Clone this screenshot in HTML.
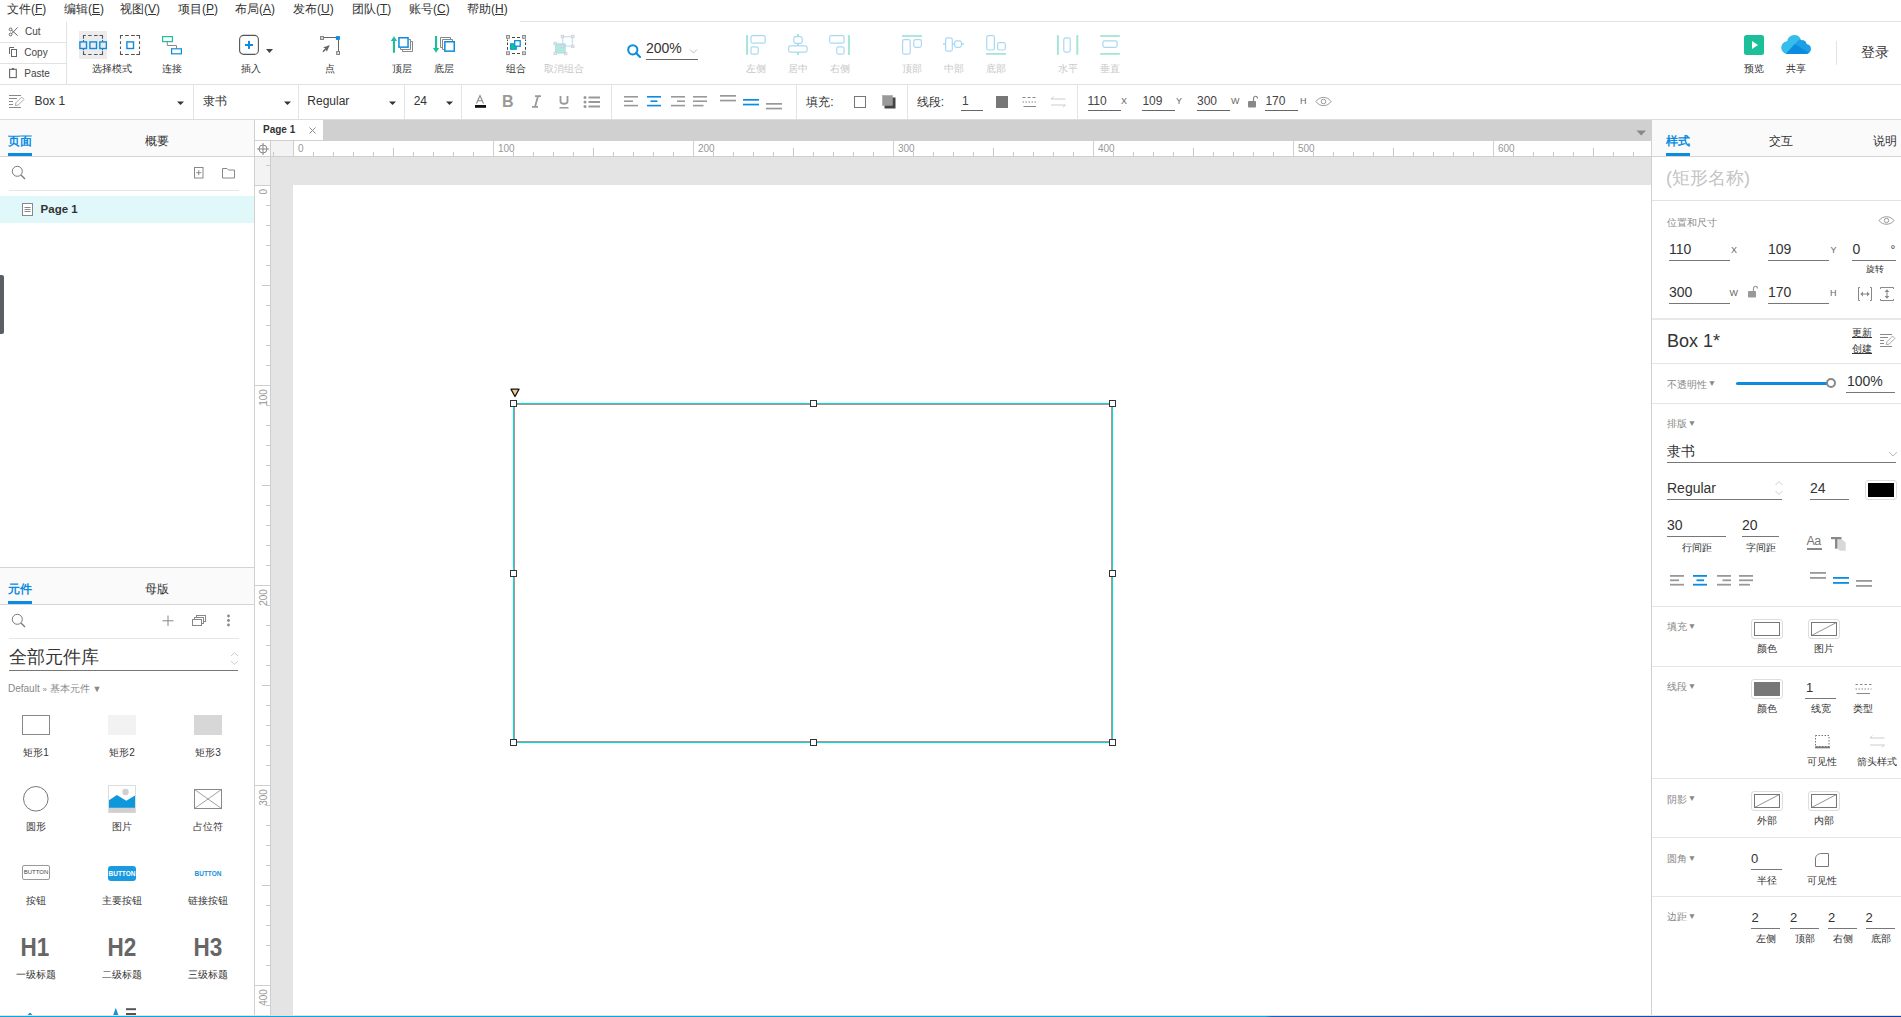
<!DOCTYPE html><html><head><meta charset="utf-8"><style>
html,body{margin:0;padding:0;width:1901px;height:1017px;overflow:hidden;background:#fff;}
body{position:relative;font-family:'Liberation Sans',sans-serif;}
div,svg{position:absolute;box-sizing:border-box;}
.t{white-space:nowrap;}
</style></head><body>
<div class="t" style="left:7px;top:3.34px;font-size:12px;line-height:12px;color:#333;font-weight:normal;text-decoration:none;">文件(<u>F</u>)</div>
<div class="t" style="left:64px;top:3.34px;font-size:12px;line-height:12px;color:#333;font-weight:normal;text-decoration:none;">编辑(<u>E</u>)</div>
<div class="t" style="left:120px;top:3.34px;font-size:12px;line-height:12px;color:#333;font-weight:normal;text-decoration:none;">视图(<u>V</u>)</div>
<div class="t" style="left:178px;top:3.34px;font-size:12px;line-height:12px;color:#333;font-weight:normal;text-decoration:none;">项目(<u>P</u>)</div>
<div class="t" style="left:235px;top:3.34px;font-size:12px;line-height:12px;color:#333;font-weight:normal;text-decoration:none;">布局(<u>A</u>)</div>
<div class="t" style="left:293px;top:3.34px;font-size:12px;line-height:12px;color:#333;font-weight:normal;text-decoration:none;">发布(<u>U</u>)</div>
<div class="t" style="left:352px;top:3.34px;font-size:12px;line-height:12px;color:#333;font-weight:normal;text-decoration:none;">团队(<u>T</u>)</div>
<div class="t" style="left:409px;top:3.34px;font-size:12px;line-height:12px;color:#333;font-weight:normal;text-decoration:none;">账号(<u>C</u>)</div>
<div class="t" style="left:467px;top:3.34px;font-size:12px;line-height:12px;color:#333;font-weight:normal;text-decoration:none;">帮助(<u>H</u>)</div>
<div style="left:520px;top:21px;width:1381px;height:1px;background:#e2e2e2"></div>
<div style="left:0px;top:84px;width:1901px;height:1px;background:#e2e2e2"></div>
<div style="left:66px;top:22px;width:1px;height:62px;background:#e2e2e2"></div>
<div style="left:0px;top:42px;width:66px;height:1px;background:#e2e2e2"></div>
<div style="left:0px;top:63px;width:66px;height:1px;background:#e2e2e2"></div>
<svg style="left:8px;top:26px;" width="11" height="11" viewBox="0 0 11 11"><g stroke="#666" fill="none" stroke-width="1"><circle cx="2.6" cy="3.4" r="1.4"/><circle cx="2.6" cy="8.5" r="1.4"/><path d="M3.7 7.6 L9.7 1.4 M3.7 4.3 L9.7 9.7"/></g></svg>
<div class="t" style="left:25px;top:26.54px;font-size:10px;line-height:10px;color:#444;font-weight:normal;">Cut</div>
<svg style="left:8px;top:46px;" width="11" height="12" viewBox="0 0 11 12"><g stroke="#666" fill="none" stroke-width="1"><path d="M1.5 8 V1.5 H6"/><rect x="3.5" y="3.5" width="5" height="7"/></g></svg>
<div class="t" style="left:24.3px;top:48.03px;font-size:10px;line-height:10px;color:#444;font-weight:normal;">Copy</div>
<svg style="left:8px;top:67px;" width="11" height="12" viewBox="0 0 11 12"><rect x="1.6" y="2.3" width="6.7" height="8.3" fill="none" stroke="#666" stroke-width="1.1"/><rect x="4" y="1" width="2" height="1.6" fill="#666"/></svg>
<div class="t" style="left:24.3px;top:68.83px;font-size:10px;line-height:10px;color:#444;font-weight:normal;">Paste</div>
<div style="left:79px;top:31px;width:28px;height:28px;background:#ececec"></div>
<svg style="left:79px;top:31px;" width="28" height="28" viewBox="0 0 28 28"><path d="M4.5 7.7 V4.5 H6.8 M9.2 4.5 H12.6 M15 4.5 H18.6 M20.4 4.5 H23.5 V7.7 M4.5 9 V10.2 M23.5 9 V10.2 M4.5 18 V19.2 M23.5 18 V19.2 M23.5 20.3 V23.5 H20.4 M18.6 23.5 H15 M12.6 23.5 H9.2 M6.8 23.5 H4.5 V20.3" fill="none" stroke="#555" stroke-width="1.1"/><g fill="none" stroke="#0a8ce0" stroke-width="1.4"><rect x="0.9" y="10.9" width="6.6" height="6.6"/><rect x="10.9" y="10.9" width="6.6" height="6.6"/><rect x="20.8" y="10.9" width="6.6" height="6.6"/></g></svg>
<svg style="left:116px;top:31px;" width="28" height="28" viewBox="0 0 28 28"><path d="M4.5 7.7 V4.5 H7 M9.1 4.5 H12.8 M15 4.5 H18.9 M20.2 4.5 H23.5 V7.7 M4.5 10.3 V12.9 M4.5 15.4 V18.1 M23.5 10.3 V12.9 M23.5 15.4 V18.1 M23.5 20.2 V23.5 H20.2 M18.9 23.5 H15 M12.8 23.5 H9.1 M7 23.5 H4.5 V20.2" fill="none" stroke="#555" stroke-width="1.1"/><rect x="10.9" y="10.9" width="6.6" height="6.6" fill="#fff" stroke="#0a8ce0" stroke-width="1.4"/></svg>
<div class="t" style="left:12px;width:200px;text-align:center;top:64.13px;font-size:10px;line-height:10px;color:#333;font-weight:normal;">选择模式</div>
<svg style="left:158px;top:31px;" width="28" height="28" viewBox="0 0 28 28"><path d="M9.3 10.5 V14.5 H18.5 V17.5" fill="none" stroke="#888" stroke-width="1"/><rect x="4.6" y="5.6" width="9.8" height="5" fill="#fff" stroke="#1dbf98" stroke-width="1.2"/><rect x="13.6" y="17.8" width="9.8" height="5" fill="#fff" stroke="#0a8ce0" stroke-width="1.2"/></svg>
<div class="t" style="left:72px;width:200px;text-align:center;top:64.13px;font-size:10px;line-height:10px;color:#333;font-weight:normal;">连接</div>
<svg style="left:236px;top:31px;" width="40" height="28" viewBox="0 0 40 28"><rect x="3.6" y="4.4" width="18.8" height="19" rx="4" fill="none" stroke="#555" stroke-width="1.1"/><rect x="12" y="9.9" width="2" height="8" fill="#0a8ce0"/><rect x="9" y="13" width="8" height="2" fill="#0a8ce0"/><path d="M30 18 H37 L33.5 22 Z" fill="#444"/></svg>
<div class="t" style="left:151px;width:200px;text-align:center;top:64.13px;font-size:10px;line-height:10px;color:#333;font-weight:normal;">插入</div>
<svg style="left:316px;top:31px;" width="28" height="28" viewBox="0 0 28 28"><path d="M7.9 6.5 H20 M22.5 8.9 V20.2" stroke="#666" stroke-width="1"/><rect x="4.6" y="5.6" width="2.8" height="2.8" fill="#eee" stroke="#777" stroke-width="1"/><rect x="19.9" y="5.1" width="4" height="3.8" fill="#0a8ce0"/><rect x="20.7" y="20.6" width="2.8" height="2.8" fill="#eee" stroke="#777" stroke-width="1"/><path d="M13.8 13.9 L7.1 16.5 L9.6 17.5 L10.8 20.8 Z" fill="#666"/><path d="M7.4 20.3 L10.2 17.5" stroke="#666" stroke-width="1.5" stroke-linecap="round"/></svg>
<div class="t" style="left:230px;width:200px;text-align:center;top:64.13px;font-size:10px;line-height:10px;color:#333;font-weight:normal;">点</div>
<svg style="left:388px;top:31px;" width="28" height="28" viewBox="0 0 28 28"><rect x="4.9" y="9" width="2.1" height="12.7" fill="#1dbf98"/><path d="M2.8 9.9 L9.1 9.9 L5.95 5.3 Z" fill="#1dbf98"/><path d="M12.5 16.9 V18.5 H22.5 V8.5 H20.8" fill="none" stroke="#888" stroke-width="1"/><path d="M14.5 18.5 V20.5 H24.5 V10.5 H22.5" fill="none" stroke="#888" stroke-width="1"/><rect x="10.95" y="6.75" width="9.1" height="9.4" fill="#fff" stroke="#0a8ce0" stroke-width="1.5"/></svg>
<div class="t" style="left:302px;width:200px;text-align:center;top:64.13px;font-size:10px;line-height:10px;color:#333;font-weight:normal;">顶层</div>
<svg style="left:430px;top:31px;" width="28" height="28" viewBox="0 0 28 28"><rect x="5" y="5" width="2.1" height="12.5" fill="#1dbf98"/><path d="M2.9 17 L9.2 17 L6.05 21.7 Z" fill="#1dbf98"/><path d="M20.5 8.5 V6.5 H10.5 V16.5 H12.5" fill="none" stroke="#888" stroke-width="1"/><path d="M22.5 10.5 V8.5 H12.5 V18.5 H14.5" fill="none" stroke="#888" stroke-width="1"/><rect x="14.85" y="10.75" width="9.4" height="9.4" fill="#fff" stroke="#0a8ce0" stroke-width="1.5"/></svg>
<div class="t" style="left:344px;width:200px;text-align:center;top:64.13px;font-size:10px;line-height:10px;color:#333;font-weight:normal;">底层</div>
<svg style="left:502px;top:31px;" width="28" height="28" viewBox="0 0 28 28"><path d="M10 6.5 H13 M15 6.5 H18 M10 22.5 H13 M15 22.5 H18 M5.5 8.5 V10 M5.5 11.5 V14 M5.5 16 V18.8 M23.5 8.5 V10 M23.5 11.5 V14 M23.5 16 V18.8" stroke="#444" stroke-width="1"/><g fill="#e4e4e4" stroke="#888" stroke-width="1"><rect x="4.6" y="4.5" width="2.8" height="2.8"/><rect x="20.6" y="4.5" width="2.8" height="2.8"/><rect x="4.6" y="20.8" width="2.8" height="2.8"/><rect x="20.6" y="20.8" width="2.8" height="2.8"/></g><rect x="8.6" y="12.8" width="5.7" height="5.5" fill="#00c896" stroke="#0a8ce0" stroke-width="1"/><rect x="12.7" y="9.7" width="5.5" height="5.5" fill="#fff" stroke="#0a8ce0" stroke-width="1.3"/></svg>
<div class="t" style="left:416px;width:200px;text-align:center;top:64.13px;font-size:10px;line-height:10px;color:#333;font-weight:normal;">组合</div>
<svg style="left:550px;top:31px;" width="28" height="28" viewBox="0 0 28 28"><rect x="5.6" y="12.8" width="9.6" height="9.3" fill="#b3e9dc" stroke="#b0dcf5" stroke-width="1"/><rect x="12.8" y="5.8" width="9.5" height="9.3" fill="none" stroke="#b0dcf5" stroke-width="1"/><g fill="#eee" stroke="#ccc" stroke-width="0.8"><rect x="4" y="11.3" width="2.4" height="2.4"/><rect x="14.5" y="21.3" width="2.4" height="2.4"/><rect x="4" y="21.3" width="2.4" height="2.4"/><rect x="11.2" y="4.2" width="2.4" height="2.4"/><rect x="21.6" y="4.2" width="2.4" height="2.4"/><rect x="21.6" y="14.2" width="2.4" height="2.4"/><rect x="11.2" y="14.2" width="2.4" height="2.4"/></g></svg>
<div class="t" style="left:464px;width:200px;text-align:center;top:64.13px;font-size:10px;line-height:10px;color:#c8c8c8;font-weight:normal;">取消组合</div>
<svg style="left:626px;top:43px;" width="16" height="16" viewBox="0 0 16 16"><circle cx="6.8" cy="6.8" r="4.6" fill="none" stroke="#0a8ce0" stroke-width="2"/><path d="M10 10 L14 14" stroke="#0a8ce0" stroke-width="2.2" stroke-linecap="round"/></svg>
<div class="t" style="left:646px;top:41.35px;font-size:14px;line-height:14px;color:#333;font-weight:normal;">200%</div>
<div style="left:646px;top:59px;width:52px;height:1px;background:#666"></div>
<svg style="left:689px;top:48px;" width="10" height="7" viewBox="0 0 10 7"><path d="M1 1.5 L4.5 5 L8 1.5" fill="none" stroke="#bbb" stroke-width="1"/></svg>
<svg style="left:742px;top:31px;" width="28" height="28" viewBox="0 0 28 28"><rect x="4.1" y="4.1" width="2.0" height="19.8" fill="#a6e5d6"/><rect x="9.0" y="4.7" width="14.2" height="7.5" rx="1.8" fill="none" stroke="#a9d8f5" stroke-width="1.2"/><rect x="9.0" y="15.8" width="7.2" height="7.4" rx="1.8" fill="none" stroke="#a9d8f5" stroke-width="1.2"/></svg>
<div class="t" style="left:656px;width:200px;text-align:center;top:64.13px;font-size:10px;line-height:10px;color:#c8c8c8;font-weight:normal;">左侧</div>
<svg style="left:784px;top:31px;" width="28" height="28" viewBox="0 0 28 28"><rect x="13" y="3" width="2.0" height="20.9" fill="#a6e5d6"/><rect x="9.8" y="5.7" width="8.4" height="6.6" rx="1.8" fill="#fff" stroke="#a9d8f5" stroke-width="1.2"/><rect x="4.6" y="14.8" width="18.5" height="6.3" rx="1.8" fill="#fff" stroke="#a9d8f5" stroke-width="1.2"/></svg>
<div class="t" style="left:698px;width:200px;text-align:center;top:64.13px;font-size:10px;line-height:10px;color:#c8c8c8;font-weight:normal;">居中</div>
<svg style="left:826px;top:31px;" width="28" height="28" viewBox="0 0 28 28"><rect x="21.9" y="4.1" width="2.0" height="19.8" fill="#a6e5d6"/><rect x="3.7" y="4.7" width="14.4" height="7.5" rx="1.8" fill="none" stroke="#a9d8f5" stroke-width="1.2"/><rect x="10.8" y="15.8" width="7.3" height="7.4" rx="1.8" fill="none" stroke="#a9d8f5" stroke-width="1.2"/></svg>
<div class="t" style="left:740px;width:200px;text-align:center;top:64.13px;font-size:10px;line-height:10px;color:#c8c8c8;font-weight:normal;">右侧</div>
<svg style="left:898px;top:31px;" width="28" height="28" viewBox="0 0 28 28"><rect x="4" y="4.1" width="20.0" height="1.8" fill="#a6e5d6"/><rect x="4.6" y="8.7" width="7.6" height="14.5" rx="1.8" fill="none" stroke="#a9d8f5" stroke-width="1.2"/><rect x="15.8" y="8.7" width="7.6" height="7.6" rx="1.8" fill="none" stroke="#a9d8f5" stroke-width="1.2"/></svg>
<div class="t" style="left:812px;width:200px;text-align:center;top:64.13px;font-size:10px;line-height:10px;color:#c8c8c8;font-weight:normal;">顶部</div>
<svg style="left:940px;top:31px;" width="28" height="28" viewBox="0 0 28 28"><rect x="3" y="12.1" width="21.0" height="1.6" fill="#a6e5d6"/><rect x="5.6" y="6.9" width="6.7" height="13.3" rx="1.8" fill="#fff" stroke="#a9d8f5" stroke-width="1.2"/><rect x="14.6" y="9.9" width="6.8" height="6.4" rx="1.8" fill="#fff" stroke="#a9d8f5" stroke-width="1.2"/></svg>
<div class="t" style="left:854px;width:200px;text-align:center;top:64.13px;font-size:10px;line-height:10px;color:#c8c8c8;font-weight:normal;">中部</div>
<svg style="left:982px;top:31px;" width="28" height="28" viewBox="0 0 28 28"><rect x="4" y="22" width="20.0" height="1.8" fill="#a6e5d6"/><rect x="4.7" y="4.7" width="7.7" height="14.3" rx="1.8" fill="none" stroke="#a9d8f5" stroke-width="1.2"/><rect x="15.6" y="11.7" width="7.7" height="7.3" rx="1.8" fill="none" stroke="#a9d8f5" stroke-width="1.2"/></svg>
<div class="t" style="left:896px;width:200px;text-align:center;top:64.13px;font-size:10px;line-height:10px;color:#c8c8c8;font-weight:normal;">底部</div>
<svg style="left:1054px;top:31px;" width="28" height="28" viewBox="0 0 28 28"><rect x="2.9" y="4.1" width="2.0" height="19.7" fill="#a6e5d6"/><rect x="22.3" y="4.1" width="2.0" height="19.7" fill="#a6e5d6"/><rect x="9.8" y="6.9" width="6.4" height="14.2" rx="1.8" fill="none" stroke="#a9d8f5" stroke-width="1.2"/></svg>
<div class="t" style="left:968px;width:200px;text-align:center;top:64.13px;font-size:10px;line-height:10px;color:#c8c8c8;font-weight:normal;">水平</div>
<svg style="left:1096px;top:31px;" width="28" height="28" viewBox="0 0 28 28"><rect x="4.2" y="4.1" width="19.6" height="1.8" fill="#a6e5d6"/><rect x="4.2" y="22" width="19.6" height="1.8" fill="#a6e5d6"/><rect x="6.9" y="9.9" width="14.2" height="6.4" rx="1.8" fill="none" stroke="#a9d8f5" stroke-width="1.2"/></svg>
<div class="t" style="left:1010px;width:200px;text-align:center;top:64.13px;font-size:10px;line-height:10px;color:#c8c8c8;font-weight:normal;">垂直</div>
<svg style="left:1744px;top:35px;" width="20" height="20" viewBox="0 0 20 20"><rect x="0" y="0" width="20" height="20" rx="2.5" fill="#1dbf98"/><path d="M8 6 L14 10 L8 14 Z" fill="#fff"/></svg>
<div class="t" style="left:1654px;width:200px;text-align:center;top:64.13px;font-size:10px;line-height:10px;color:#333;font-weight:normal;">预览</div>
<svg style="left:1780px;top:34px;" width="32" height="21" viewBox="0 0 32 21"><defs><clipPath id="cl"><circle cx="7.5" cy="13.6" r="6.3"/><circle cx="14.2" cy="8" r="7"/><circle cx="22" cy="10.8" r="4.6"/><circle cx="26" cy="15" r="4.8"/><rect x="7.5" y="12" width="18.5" height="7.9"/></clipPath></defs><g clip-path="url(#cl)"><rect x="0" y="0" width="32" height="21" fill="#36bdea"/><path d="M5.8 20 L19.2 5.5 L32 5.5 L32 21 Z" fill="#1c9fe4"/><path d="M5.8 20 L14.7 10 L31 20 Z" fill="#0a8de0"/></g></svg>
<div class="t" style="left:1696px;width:200px;text-align:center;top:64.13px;font-size:10px;line-height:10px;color:#333;font-weight:normal;">共享</div>
<div style="left:1836px;top:41px;width:1px;height:24px;background:#e4e4e4"></div>
<div class="t" style="left:1861px;top:45.45px;font-size:14px;line-height:14px;color:#333;font-weight:normal;">登录</div>
<div style="left:0px;top:119px;width:1901px;height:1px;background:#dcdcdc"></div>
<svg style="left:8px;top:94px;" width="17" height="15" viewBox="0 0 17 15"><path d="M1 1.5 H13 M1 4.5 H9 M1 7.5 H5 M1 10.5 H5 M1 13.5 H13" stroke="#888" stroke-width="1"/><path d="M7.3 11.7 L7.9 8.8 L13.6 3.1 L15.9 5.4 L10.2 11.1 Z" fill="none" stroke="#aaa" stroke-width="1"/></svg>
<div class="t" style="left:34.4px;top:95.04px;font-size:12px;line-height:12px;color:#333;font-weight:normal;">Box 1</div>
<svg style="left:177px;top:101px;" width="7" height="4" viewBox="0 0 7 4"><path d="M0 0.5 H7 L3.5 4 Z" fill="#333"/></svg>
<div style="left:193px;top:85px;width:1px;height:34px;background:#e4e4e4"></div>
<div class="t" style="left:203px;top:95.04px;font-size:12px;line-height:12px;color:#333;font-weight:normal;">隶书</div>
<svg style="left:284px;top:101px;" width="7" height="4" viewBox="0 0 7 4"><path d="M0 0.5 H7 L3.5 4 Z" fill="#333"/></svg>
<div style="left:298px;top:85px;width:1px;height:34px;background:#e4e4e4"></div>
<div class="t" style="left:307.3px;top:95.04px;font-size:12px;line-height:12px;color:#333;font-weight:normal;">Regular</div>
<svg style="left:389px;top:101px;" width="7" height="4" viewBox="0 0 7 4"><path d="M0 0.5 H7 L3.5 4 Z" fill="#333"/></svg>
<div style="left:404px;top:85px;width:1px;height:34px;background:#e4e4e4"></div>
<div class="t" style="left:413.7px;top:95.04px;font-size:12px;line-height:12px;color:#333;font-weight:normal;">24</div>
<svg style="left:446px;top:101px;" width="7" height="4" viewBox="0 0 7 4"><path d="M0 0.5 H7 L3.5 4 Z" fill="#333"/></svg>
<div style="left:461px;top:85px;width:1px;height:34px;background:#e4e4e4"></div>
<svg style="left:474px;top:94px;" width="13" height="15" viewBox="0 0 13 15"><path d="M2.5 9.5 L6 1.5 L9.5 9.5 M3.8 6.8 H8.2" fill="none" stroke="#888" stroke-width="1.1"/><rect x="1" y="11" width="11" height="2.8" fill="#111"/></svg>
<div class="t" style="left:502px;top:94.06px;font-size:16px;line-height:16px;color:#999;font-weight:bold;">B</div>
<svg style="left:531px;top:95px;" width="11" height="13" viewBox="0 0 11 13"><path d="M4 1.2 H10 M1 11.8 H7 M7 1.2 L4 11.8" fill="none" stroke="#999" stroke-width="1.8"/></svg>
<svg style="left:558px;top:95px;" width="12" height="14" viewBox="0 0 12 14"><path d="M2.5 1 V6.5 C2.5 9.5 9.5 9.5 9.5 6.5 V1" fill="none" stroke="#999" stroke-width="1.8"/><path d="M1.5 12.8 H10.5" stroke="#999" stroke-width="1.5"/></svg>
<svg style="left:583px;top:95px;" width="18" height="14" viewBox="0 0 18 14"><g fill="#999"><circle cx="2" cy="2.5" r="1.5"/><circle cx="2" cy="7" r="1.5"/><circle cx="2" cy="11.5" r="1.5"/><rect x="5.5" y="1.5" width="11.5" height="2"/><rect x="5.5" y="6" width="11.5" height="2"/><rect x="5.5" y="10.5" width="11.5" height="2"/></g></svg>
<div style="left:611px;top:85px;width:1px;height:34px;background:#e4e4e4"></div>
<svg style="left:624px;top:96.4px;" width="14" height="11" viewBox="0 0 14 11"><rect x="0" y="0.0" width="14" height="1.6" fill="#999"/><rect x="0" y="4.4" width="9" height="1.6" fill="#999"/><rect x="0" y="8.8" width="14" height="1.6" fill="#999"/></svg>
<svg style="left:647px;top:96.4px;" width="14" height="11" viewBox="0 0 14 11"><rect x="0" y="0.0" width="14" height="1.6" fill="#0a8ce0"/><rect x="3.5" y="4.4" width="7" height="1.6" fill="#0a8ce0"/><rect x="0" y="8.8" width="14" height="1.6" fill="#0a8ce0"/></svg>
<svg style="left:671px;top:96.4px;" width="14" height="11" viewBox="0 0 14 11"><rect x="0" y="0.0" width="14" height="1.6" fill="#999"/><rect x="6" y="4.4" width="8" height="1.6" fill="#999"/><rect x="0" y="8.8" width="14" height="1.6" fill="#999"/></svg>
<svg style="left:693px;top:96.4px;" width="14" height="11" viewBox="0 0 14 11"><rect x="0" y="0.0" width="14" height="1.6" fill="#999"/><rect x="0" y="4.4" width="14" height="1.6" fill="#999"/><rect x="0" y="8.8" width="10.5" height="1.6" fill="#999"/></svg>
<svg style="left:720px;top:94.6px;" width="16" height="7" viewBox="0 0 16 7"><rect x="0" y="0" width="16" height="1.7" fill="#999"/><rect x="0" y="4.7" width="16" height="1.7" fill="#999"/></svg>
<svg style="left:743px;top:99px;" width="16" height="7" viewBox="0 0 16 7"><rect x="0" y="0" width="16" height="1.7" fill="#0a8ce0"/><rect x="0" y="4.7" width="16" height="1.7" fill="#0a8ce0"/></svg>
<svg style="left:766px;top:103px;" width="16" height="7" viewBox="0 0 16 7"><rect x="0" y="0" width="16" height="1.7" fill="#999"/><rect x="0" y="4.7" width="16" height="1.7" fill="#999"/></svg>
<div style="left:796px;top:85px;width:1px;height:34px;background:#e4e4e4"></div>
<div class="t" style="left:806.2px;top:95.84px;font-size:12px;line-height:12px;color:#333;font-weight:normal;">填充:</div>
<div style="left:854px;top:96px;width:12px;height:12px;border:1px solid #777;background:#fff"></div>
<svg style="left:882px;top:95px;" width="14" height="14" viewBox="0 0 14 14"><rect x="2.5" y="2.5" width="11" height="11" fill="#444"/><rect x="0.5" y="0.5" width="10" height="10" fill="#999" stroke="#999" stroke-width="0.5"/></svg>
<div style="left:907px;top:85px;width:1px;height:34px;background:#e4e4e4"></div>
<div class="t" style="left:916.8px;top:95.84px;font-size:12px;line-height:12px;color:#333;font-weight:normal;">线段:</div>
<div class="t" style="left:962px;top:95.04px;font-size:12px;line-height:12px;color:#444;font-weight:normal;">1</div>
<div style="left:961px;top:110px;width:22px;height:1px;background:#666"></div>
<div style="left:996px;top:96px;width:12px;height:12px;background:#777"></div>
<svg style="left:1022px;top:96px;" width="16" height="12" viewBox="0 0 16 12"><path d="M0.5 1.5 H3.5 M5.5 1.5 H8.5 M10.5 1.5 H13.5 M0.5 6 H2 M3.5 6 H5 M6.5 6 H8 M9.5 6 H11 M12.5 6 H14" stroke="#888" stroke-width="1"/><path d="M1.5 10.5 H14" stroke="#888" stroke-width="1"/></svg>
<svg style="left:1050px;top:96px;" width="17" height="12" viewBox="0 0 17 12"><g stroke="#ccc" stroke-width="1" fill="none"><path d="M1 3 H15.5 M1 3 L3.5 0.8 M15.5 9 H1 M15.5 9 L13 11.2"/></g></svg>
<div style="left:1077px;top:85px;width:1px;height:34px;background:#e4e4e4"></div>
<div class="t" style="left:1087.5px;top:95.04px;font-size:12px;line-height:12px;color:#444;font-weight:normal;">110</div>
<div style="left:1087.5px;top:110px;width:33px;height:1px;background:#666"></div>
<div class="t" style="left:1121px;top:97.38px;font-size:9px;line-height:9px;color:#666;font-weight:normal;">X</div>
<div class="t" style="left:1142.4px;top:95.04px;font-size:12px;line-height:12px;color:#444;font-weight:normal;">109</div>
<div style="left:1142.4px;top:110px;width:33px;height:1px;background:#666"></div>
<div class="t" style="left:1176px;top:97.38px;font-size:9px;line-height:9px;color:#666;font-weight:normal;">Y</div>
<div class="t" style="left:1197px;top:95.04px;font-size:12px;line-height:12px;color:#444;font-weight:normal;">300</div>
<div style="left:1197px;top:110px;width:33px;height:1px;background:#666"></div>
<div class="t" style="left:1231px;top:97.38px;font-size:9px;line-height:9px;color:#666;font-weight:normal;">W</div>
<svg style="left:1247px;top:95px;" width="12" height="13" viewBox="0 0 12 13"><rect x="1" y="6" width="8" height="6.5" rx="1" fill="#888"/><path d="M6.5 6 V3.5 C6.5 0.5 10.5 0.5 10.5 3.5" fill="none" stroke="#888" stroke-width="1.2"/></svg>
<div class="t" style="left:1265.4px;top:95.04px;font-size:12px;line-height:12px;color:#444;font-weight:normal;">170</div>
<div style="left:1265.4px;top:110px;width:33px;height:1px;background:#666"></div>
<div class="t" style="left:1300px;top:97.38px;font-size:9px;line-height:9px;color:#666;font-weight:normal;">H</div>
<svg style="left:1315px;top:96px;" width="17" height="11" viewBox="0 0 17 11"><path d="M1 5.5 C4.5 0 12.5 0 16 5.5 C12.5 11 4.5 11 1 5.5 Z" fill="none" stroke="#999" stroke-width="1"/><circle cx="8.5" cy="5.5" r="2.3" fill="none" stroke="#999" stroke-width="1"/></svg>
<div style="left:0px;top:120px;width:254px;height:36px;background:#fafafa"></div>
<div style="left:0px;top:156px;width:254px;height:1px;background:#d4d4d4"></div>
<div style="left:254px;top:120px;width:1px;height:897px;background:#d0d0d0"></div>
<div style="left:0px;top:196px;width:254px;height:27px;background:#e0f8fa"></div>
<div style="left:0px;top:567px;width:254px;height:1px;background:#d4d4d4"></div>
<div style="left:0px;top:568px;width:254px;height:36px;background:#fafafa"></div>
<div style="left:0px;top:604px;width:254px;height:1px;background:#d4d4d4"></div>
<div class="t" style="left:8px;top:134.84px;font-size:12px;line-height:12px;color:#0a8ce0;font-weight:bold;">页面</div>
<div style="left:8px;top:153px;width:24px;height:3px;background:#0a8ce0"></div>
<div class="t" style="left:145px;top:134.84px;font-size:12px;line-height:12px;color:#333;font-weight:normal;">概要</div>
<svg style="left:11px;top:165px;" width="16" height="16" viewBox="0 0 16 16"><circle cx="6.3" cy="6.3" r="5" fill="none" stroke="#777" stroke-width="1"/><path d="M10 10 L14 14" stroke="#777" stroke-width="1.2"/></svg>
<svg style="left:193px;top:166px;" width="11" height="13" viewBox="0 0 11 13"><rect x="1.5" y="1.5" width="8.5" height="10.5" fill="none" stroke="#888" stroke-width="1"/><path d="M5.75 4.2 V9.2 M3.25 6.7 H8.25" stroke="#888" stroke-width="1"/></svg>
<svg style="left:221px;top:167px;" width="15" height="12" viewBox="0 0 15 12"><path d="M1.5 1.5 H6 L7.5 3 H13.5 V11 H1.5 Z" fill="none" stroke="#888" stroke-width="1"/></svg>
<div style="left:9px;top:190px;width:230px;height:1px;background:#e6e6e6"></div>
<svg style="left:21px;top:202px;" width="13" height="15" viewBox="0 0 13 15"><rect x="1.5" y="1.5" width="10" height="12" fill="#fff" stroke="#888" stroke-width="1"/><path d="M3.5 5.5 H9.5 M3.5 7.5 H9.5 M3.5 9.5 H9.5" stroke="#888" stroke-width="1"/></svg>
<div class="t" style="left:40.6px;top:203.57px;font-size:11.5px;line-height:11.5px;color:#333;font-weight:bold;">Page 1</div>
<div style="left:0px;top:275px;width:4px;height:59px;background:#5c5e66;border-radius:0 2px 2px 0"></div>
<div class="t" style="left:8px;top:583.14px;font-size:12px;line-height:12px;color:#0a8ce0;font-weight:bold;">元件</div>
<div style="left:8px;top:601px;width:24px;height:3px;background:#0a8ce0"></div>
<div class="t" style="left:145px;top:583.14px;font-size:12px;line-height:12px;color:#333;font-weight:normal;">母版</div>
<svg style="left:11px;top:613px;" width="16" height="16" viewBox="0 0 16 16"><circle cx="6.3" cy="6.3" r="5" fill="none" stroke="#777" stroke-width="1"/><path d="M10 10 L14 14" stroke="#777" stroke-width="1.2"/></svg>
<svg style="left:162px;top:615px;" width="12" height="12" viewBox="0 0 12 12"><path d="M6 0.5 V11 M0.5 5.8 H11.5" stroke="#888" stroke-width="1"/></svg>
<svg style="left:191px;top:614px;" width="16" height="13" viewBox="0 0 16 13"><g fill="#fff" stroke="#888" stroke-width="1"><rect x="5.5" y="1.5" width="9" height="6"/><rect x="3.5" y="3.5" width="9" height="6"/><rect x="1.5" y="5.5" width="9" height="6"/></g></svg>
<svg style="left:226px;top:614px;" width="5" height="13" viewBox="0 0 5 13"><g fill="#888"><circle cx="2.5" cy="2" r="1.4"/><circle cx="2.5" cy="6.5" r="1.4"/><circle cx="2.5" cy="11" r="1.4"/></g></svg>
<div style="left:9px;top:638px;width:230px;height:1px;background:#e6e6e6"></div>
<div class="t" style="left:9px;top:648.26px;font-size:18px;line-height:18px;color:#333;font-weight:normal;">全部元件库</div>
<div style="left:9px;top:670px;width:229px;height:1px;background:#777"></div>
<svg style="left:229px;top:651px;" width="11" height="15" viewBox="0 0 11 15"><path d="M2 5 L5.5 1.8 L9 5 M2 10 L5.5 13.2 L9 10" fill="none" stroke="#ccc" stroke-width="1"/></svg>
<div class="t" style="left:8px;top:684.03px;font-size:10px;line-height:10px;color:#888;font-weight:normal;">Default <span style='font-size:8px'>»</span> 基本元件 <span style='font-size:9px'>▼</span></div>
<div style="left:22px;top:715px;width:28px;height:20px;border:1px solid #888;background:#fff"></div>
<div style="left:108px;top:715px;width:28px;height:20px;background:#f2f2f2"></div>
<div style="left:194px;top:715px;width:28px;height:20px;background:#d7d7d7"></div>
<div class="t" style="left:-64px;width:200px;text-align:center;top:747.53px;font-size:10px;line-height:10px;color:#333;font-weight:normal;">矩形1</div>
<div class="t" style="left:22px;width:200px;text-align:center;top:747.53px;font-size:10px;line-height:10px;color:#333;font-weight:normal;">矩形2</div>
<div class="t" style="left:108px;width:200px;text-align:center;top:747.53px;font-size:10px;line-height:10px;color:#333;font-weight:normal;">矩形3</div>
<svg style="left:22px;top:785px;" width="28" height="28" viewBox="0 0 28 28"><circle cx="13.8" cy="13.8" r="12.3" fill="#fff" stroke="#777" stroke-width="1"/></svg>
<svg style="left:108px;top:785px;" width="28" height="28" viewBox="0 0 28 28"><rect x="0.5" y="0.5" width="27" height="27" fill="#fff" stroke="#ddd" stroke-width="1"/><rect x="1" y="22" width="26" height="5.5" fill="#d0d0d0"/><path d="M1 22.8 V15.3 L8.9 10 L18.3 15.8 L27 10.6 V22.8 Z" fill="#0e98dc"/><circle cx="17.5" cy="7" r="3.2" fill="#d0d0d0"/></svg>
<svg style="left:194px;top:789px;" width="28" height="21" viewBox="0 0 28 21"><rect x="0.5" y="0.5" width="27" height="19" fill="#fff" stroke="#888" stroke-width="1"/><path d="M0.5 0.5 L27.5 19.5 M27.5 0.5 L0.5 19.5" stroke="#888" stroke-width="0.8"/></svg>
<div class="t" style="left:-64px;width:200px;text-align:center;top:821.53px;font-size:10px;line-height:10px;color:#333;font-weight:normal;">圆形</div>
<div class="t" style="left:22px;width:200px;text-align:center;top:821.53px;font-size:10px;line-height:10px;color:#333;font-weight:normal;">图片</div>
<div class="t" style="left:108px;width:200px;text-align:center;top:821.53px;font-size:10px;line-height:10px;color:#333;font-weight:normal;">占位符</div>
<div style="left:22px;top:865px;width:28px;height:15px;border:1px solid #999;border-radius:2px;background:#fff;font-size:6px;line-height:13px;text-align:center;color:#444;font-family:'Liberation Sans',sans-serif">BUTTON</div>
<div style="left:108px;top:866px;width:28px;height:15px;border-radius:3px;background:#1a9be0;font-size:6.5px;font-weight:bold;line-height:15px;text-align:center;color:#fff;font-family:'Liberation Sans',sans-serif">BUTTON</div>
<div style="left:190px;top:866px;width:36px;height:15px;font-size:6.5px;font-weight:bold;line-height:15px;text-align:center;color:#1a8fd8;font-family:'Liberation Sans',sans-serif">BUTTON</div>
<div class="t" style="left:-64px;width:200px;text-align:center;top:895.53px;font-size:10px;line-height:10px;color:#333;font-weight:normal;">按钮</div>
<div class="t" style="left:22px;width:200px;text-align:center;top:895.53px;font-size:10px;line-height:10px;color:#333;font-weight:normal;">主要按钮</div>
<div class="t" style="left:108px;width:200px;text-align:center;top:895.53px;font-size:10px;line-height:10px;color:#333;font-weight:normal;">链接按钮</div>
<div class="t" style="left:-65px;width:200px;text-align:center;top:934.54px;font-size:25px;line-height:25px;color:#666;font-weight:bold;transform:scaleX(0.9)">H1</div>
<div class="t" style="left:21.700000000000003px;width:200px;text-align:center;top:934.54px;font-size:25px;line-height:25px;color:#666;font-weight:bold;transform:scaleX(0.9)">H2</div>
<div class="t" style="left:108px;width:200px;text-align:center;top:934.54px;font-size:25px;line-height:25px;color:#666;font-weight:bold;transform:scaleX(0.9)">H3</div>
<div class="t" style="left:-64px;width:200px;text-align:center;top:969.53px;font-size:10px;line-height:10px;color:#333;font-weight:normal;">一级标题</div>
<div class="t" style="left:22px;width:200px;text-align:center;top:969.53px;font-size:10px;line-height:10px;color:#333;font-weight:normal;">二级标题</div>
<div class="t" style="left:108px;width:200px;text-align:center;top:969.53px;font-size:10px;line-height:10px;color:#333;font-weight:normal;">三级标题</div>
<svg style="left:26px;top:1005px;" width="8" height="10" viewBox="0 0 8 10"><path d="M1.5 10 L4 7.5 L6.5 10 Z" fill="#1793d6"/></svg>
<svg style="left:112px;top:1007px;" width="26" height="9" viewBox="0 0 26 9"><path d="M1 8.5 L3.8 0.8 L6.6 8.5 Z" fill="#1793d6"/><rect x="14" y="1.2" width="10" height="2" fill="#555"/><rect x="14" y="6" width="10" height="2" fill="#555"/></svg>
<div style="left:255px;top:120px;width:1396px;height:20px;background:#d0d0d0"></div>
<div style="left:255px;top:140px;width:1396px;height:1px;background:#d0d0d0"></div>
<div style="left:255px;top:141px;width:1396px;height:15px;background:#fff"></div>
<div style="left:255px;top:156px;width:1396px;height:1px;background:#cfcfcf"></div>
<div style="left:270px;top:141px;width:1px;height:876px;background:#cfcfcf"></div>
<div style="left:271px;top:157px;width:1380px;height:860px;background:#e4e4e4"></div>
<div style="left:293px;top:185px;width:1358px;height:832px;background:#fff"></div>
<div style="left:255px;top:120px;width:68px;height:20px;background:#fff"></div>
<div class="t" style="left:263px;top:125.03px;font-size:10px;line-height:10px;color:#333;font-weight:bold;">Page 1</div>
<svg style="left:308px;top:126px;" width="9" height="9" viewBox="0 0 9 9"><path d="M1.5 1.5 L7.5 7.5 M7.5 1.5 L1.5 7.5" stroke="#888" stroke-width="1"/></svg>
<svg style="left:1636px;top:130px;" width="11" height="7" viewBox="0 0 11 7"><path d="M0.5 0.5 H10 L5.25 5.5 Z" fill="#888"/></svg>
<svg style="left:256px;top:142px;" width="14" height="14" viewBox="0 0 14 14"><circle cx="7" cy="7" r="4" fill="none" stroke="#888" stroke-width="1"/><path d="M7 1 V13 M1 7 H13" stroke="#888" stroke-width="1"/></svg>
<div style="left:271px;top:141px;width:22px;height:15px;background:#f3f3f3"></div>
<div style="left:293px;top:141px;width:1px;height:15px;background:#cfcfcf"></div>
<div style="left:255px;top:157px;width:15px;height:28px;background:#f3f3f3"></div>
<div style="left:255px;top:185px;width:15px;height:1px;background:#cfcfcf"></div>
<div style="left:273px;top:152px;width:1px;height:4px;background:#c8c8c8"></div>
<div style="left:293px;top:141px;width:1px;height:15px;background:#cfcfcf"></div>
<div class="t" style="left:298px;top:143.53px;font-size:10px;line-height:10px;color:#999;font-weight:normal;">0</div>
<div style="left:313px;top:152px;width:1px;height:4px;background:#c8c8c8"></div>
<div style="left:333px;top:152px;width:1px;height:4px;background:#c8c8c8"></div>
<div style="left:353px;top:152px;width:1px;height:4px;background:#c8c8c8"></div>
<div style="left:373px;top:152px;width:1px;height:4px;background:#c8c8c8"></div>
<div style="left:393px;top:148px;width:1px;height:8px;background:#c8c8c8"></div>
<div style="left:413px;top:152px;width:1px;height:4px;background:#c8c8c8"></div>
<div style="left:433px;top:152px;width:1px;height:4px;background:#c8c8c8"></div>
<div style="left:453px;top:152px;width:1px;height:4px;background:#c8c8c8"></div>
<div style="left:473px;top:152px;width:1px;height:4px;background:#c8c8c8"></div>
<div style="left:493px;top:141px;width:1px;height:15px;background:#cfcfcf"></div>
<div class="t" style="left:498px;top:143.53px;font-size:10px;line-height:10px;color:#999;font-weight:normal;">100</div>
<div style="left:513px;top:152px;width:1px;height:4px;background:#c8c8c8"></div>
<div style="left:533px;top:152px;width:1px;height:4px;background:#c8c8c8"></div>
<div style="left:553px;top:152px;width:1px;height:4px;background:#c8c8c8"></div>
<div style="left:573px;top:152px;width:1px;height:4px;background:#c8c8c8"></div>
<div style="left:593px;top:148px;width:1px;height:8px;background:#c8c8c8"></div>
<div style="left:613px;top:152px;width:1px;height:4px;background:#c8c8c8"></div>
<div style="left:633px;top:152px;width:1px;height:4px;background:#c8c8c8"></div>
<div style="left:653px;top:152px;width:1px;height:4px;background:#c8c8c8"></div>
<div style="left:673px;top:152px;width:1px;height:4px;background:#c8c8c8"></div>
<div style="left:693px;top:141px;width:1px;height:15px;background:#cfcfcf"></div>
<div class="t" style="left:698px;top:143.53px;font-size:10px;line-height:10px;color:#999;font-weight:normal;">200</div>
<div style="left:713px;top:152px;width:1px;height:4px;background:#c8c8c8"></div>
<div style="left:733px;top:152px;width:1px;height:4px;background:#c8c8c8"></div>
<div style="left:753px;top:152px;width:1px;height:4px;background:#c8c8c8"></div>
<div style="left:773px;top:152px;width:1px;height:4px;background:#c8c8c8"></div>
<div style="left:793px;top:148px;width:1px;height:8px;background:#c8c8c8"></div>
<div style="left:813px;top:152px;width:1px;height:4px;background:#c8c8c8"></div>
<div style="left:833px;top:152px;width:1px;height:4px;background:#c8c8c8"></div>
<div style="left:853px;top:152px;width:1px;height:4px;background:#c8c8c8"></div>
<div style="left:873px;top:152px;width:1px;height:4px;background:#c8c8c8"></div>
<div style="left:893px;top:141px;width:1px;height:15px;background:#cfcfcf"></div>
<div class="t" style="left:898px;top:143.53px;font-size:10px;line-height:10px;color:#999;font-weight:normal;">300</div>
<div style="left:913px;top:152px;width:1px;height:4px;background:#c8c8c8"></div>
<div style="left:933px;top:152px;width:1px;height:4px;background:#c8c8c8"></div>
<div style="left:953px;top:152px;width:1px;height:4px;background:#c8c8c8"></div>
<div style="left:973px;top:152px;width:1px;height:4px;background:#c8c8c8"></div>
<div style="left:993px;top:148px;width:1px;height:8px;background:#c8c8c8"></div>
<div style="left:1013px;top:152px;width:1px;height:4px;background:#c8c8c8"></div>
<div style="left:1033px;top:152px;width:1px;height:4px;background:#c8c8c8"></div>
<div style="left:1053px;top:152px;width:1px;height:4px;background:#c8c8c8"></div>
<div style="left:1073px;top:152px;width:1px;height:4px;background:#c8c8c8"></div>
<div style="left:1093px;top:141px;width:1px;height:15px;background:#cfcfcf"></div>
<div class="t" style="left:1098px;top:143.53px;font-size:10px;line-height:10px;color:#999;font-weight:normal;">400</div>
<div style="left:1113px;top:152px;width:1px;height:4px;background:#c8c8c8"></div>
<div style="left:1133px;top:152px;width:1px;height:4px;background:#c8c8c8"></div>
<div style="left:1153px;top:152px;width:1px;height:4px;background:#c8c8c8"></div>
<div style="left:1173px;top:152px;width:1px;height:4px;background:#c8c8c8"></div>
<div style="left:1193px;top:148px;width:1px;height:8px;background:#c8c8c8"></div>
<div style="left:1213px;top:152px;width:1px;height:4px;background:#c8c8c8"></div>
<div style="left:1233px;top:152px;width:1px;height:4px;background:#c8c8c8"></div>
<div style="left:1253px;top:152px;width:1px;height:4px;background:#c8c8c8"></div>
<div style="left:1273px;top:152px;width:1px;height:4px;background:#c8c8c8"></div>
<div style="left:1293px;top:141px;width:1px;height:15px;background:#cfcfcf"></div>
<div class="t" style="left:1298px;top:143.53px;font-size:10px;line-height:10px;color:#999;font-weight:normal;">500</div>
<div style="left:1313px;top:152px;width:1px;height:4px;background:#c8c8c8"></div>
<div style="left:1333px;top:152px;width:1px;height:4px;background:#c8c8c8"></div>
<div style="left:1353px;top:152px;width:1px;height:4px;background:#c8c8c8"></div>
<div style="left:1373px;top:152px;width:1px;height:4px;background:#c8c8c8"></div>
<div style="left:1393px;top:148px;width:1px;height:8px;background:#c8c8c8"></div>
<div style="left:1413px;top:152px;width:1px;height:4px;background:#c8c8c8"></div>
<div style="left:1433px;top:152px;width:1px;height:4px;background:#c8c8c8"></div>
<div style="left:1453px;top:152px;width:1px;height:4px;background:#c8c8c8"></div>
<div style="left:1473px;top:152px;width:1px;height:4px;background:#c8c8c8"></div>
<div style="left:1493px;top:141px;width:1px;height:15px;background:#cfcfcf"></div>
<div class="t" style="left:1498px;top:143.53px;font-size:10px;line-height:10px;color:#999;font-weight:normal;">600</div>
<div style="left:1513px;top:152px;width:1px;height:4px;background:#c8c8c8"></div>
<div style="left:1533px;top:152px;width:1px;height:4px;background:#c8c8c8"></div>
<div style="left:1553px;top:152px;width:1px;height:4px;background:#c8c8c8"></div>
<div style="left:1573px;top:152px;width:1px;height:4px;background:#c8c8c8"></div>
<div style="left:1593px;top:148px;width:1px;height:8px;background:#c8c8c8"></div>
<div style="left:1613px;top:152px;width:1px;height:4px;background:#c8c8c8"></div>
<div style="left:1633px;top:152px;width:1px;height:4px;background:#c8c8c8"></div>
<div style="left:266px;top:165px;width:4px;height:1px;background:#c8c8c8"></div>
<div style="left:255px;top:185px;width:15px;height:1px;background:#cfcfcf"></div>
<div class="t" style="left:233px;top:188px;width:60px;height:10px;font-size:10px;line-height:10px;color:#999;transform-origin:30px 5px;transform:translate(0,0) rotate(-90deg);text-align:right;"></div>
<div style="left:266px;top:205px;width:4px;height:1px;background:#c8c8c8"></div>
<div style="left:266px;top:225px;width:4px;height:1px;background:#c8c8c8"></div>
<div style="left:266px;top:245px;width:4px;height:1px;background:#c8c8c8"></div>
<div style="left:266px;top:265px;width:4px;height:1px;background:#c8c8c8"></div>
<div style="left:262px;top:285px;width:8px;height:1px;background:#c8c8c8"></div>
<div style="left:266px;top:305px;width:4px;height:1px;background:#c8c8c8"></div>
<div style="left:266px;top:325px;width:4px;height:1px;background:#c8c8c8"></div>
<div style="left:266px;top:345px;width:4px;height:1px;background:#c8c8c8"></div>
<div style="left:266px;top:365px;width:4px;height:1px;background:#c8c8c8"></div>
<div style="left:255px;top:385px;width:15px;height:1px;background:#cfcfcf"></div>
<div class="t" style="left:233px;top:388px;width:60px;height:10px;font-size:10px;line-height:10px;color:#999;transform-origin:30px 5px;transform:translate(0,0) rotate(-90deg);text-align:right;"></div>
<div style="left:266px;top:405px;width:4px;height:1px;background:#c8c8c8"></div>
<div style="left:266px;top:425px;width:4px;height:1px;background:#c8c8c8"></div>
<div style="left:266px;top:445px;width:4px;height:1px;background:#c8c8c8"></div>
<div style="left:266px;top:465px;width:4px;height:1px;background:#c8c8c8"></div>
<div style="left:262px;top:485px;width:8px;height:1px;background:#c8c8c8"></div>
<div style="left:266px;top:505px;width:4px;height:1px;background:#c8c8c8"></div>
<div style="left:266px;top:525px;width:4px;height:1px;background:#c8c8c8"></div>
<div style="left:266px;top:545px;width:4px;height:1px;background:#c8c8c8"></div>
<div style="left:266px;top:565px;width:4px;height:1px;background:#c8c8c8"></div>
<div style="left:255px;top:585px;width:15px;height:1px;background:#cfcfcf"></div>
<div class="t" style="left:233px;top:588px;width:60px;height:10px;font-size:10px;line-height:10px;color:#999;transform-origin:30px 5px;transform:translate(0,0) rotate(-90deg);text-align:right;"></div>
<div style="left:266px;top:605px;width:4px;height:1px;background:#c8c8c8"></div>
<div style="left:266px;top:625px;width:4px;height:1px;background:#c8c8c8"></div>
<div style="left:266px;top:645px;width:4px;height:1px;background:#c8c8c8"></div>
<div style="left:266px;top:665px;width:4px;height:1px;background:#c8c8c8"></div>
<div style="left:262px;top:685px;width:8px;height:1px;background:#c8c8c8"></div>
<div style="left:266px;top:705px;width:4px;height:1px;background:#c8c8c8"></div>
<div style="left:266px;top:725px;width:4px;height:1px;background:#c8c8c8"></div>
<div style="left:266px;top:745px;width:4px;height:1px;background:#c8c8c8"></div>
<div style="left:266px;top:765px;width:4px;height:1px;background:#c8c8c8"></div>
<div style="left:255px;top:785px;width:15px;height:1px;background:#cfcfcf"></div>
<div class="t" style="left:233px;top:788px;width:60px;height:10px;font-size:10px;line-height:10px;color:#999;transform-origin:30px 5px;transform:translate(0,0) rotate(-90deg);text-align:right;"></div>
<div style="left:266px;top:805px;width:4px;height:1px;background:#c8c8c8"></div>
<div style="left:266px;top:825px;width:4px;height:1px;background:#c8c8c8"></div>
<div style="left:266px;top:845px;width:4px;height:1px;background:#c8c8c8"></div>
<div style="left:266px;top:865px;width:4px;height:1px;background:#c8c8c8"></div>
<div style="left:262px;top:885px;width:8px;height:1px;background:#c8c8c8"></div>
<div style="left:266px;top:905px;width:4px;height:1px;background:#c8c8c8"></div>
<div style="left:266px;top:925px;width:4px;height:1px;background:#c8c8c8"></div>
<div style="left:266px;top:945px;width:4px;height:1px;background:#c8c8c8"></div>
<div style="left:266px;top:965px;width:4px;height:1px;background:#c8c8c8"></div>
<div style="left:255px;top:985px;width:15px;height:1px;background:#cfcfcf"></div>
<div class="t" style="left:233px;top:988px;width:60px;height:10px;font-size:10px;line-height:10px;color:#999;transform-origin:30px 5px;transform:translate(0,0) rotate(-90deg);text-align:right;"></div>
<div style="left:266px;top:1005px;width:4px;height:1px;background:#c8c8c8"></div>
<div class="t" style="left:259px;top:188px;width:10px;height:40px;"><div style="position:absolute;left:0;top:0;width:40px;height:10px;font-size:10px;line-height:10px;color:#999;transform-origin:0 0;transform:translate(0px,6.6px) rotate(-90deg);">0</div></div>
<div class="t" style="left:259px;top:388px;width:10px;height:40px;"><div style="position:absolute;left:0;top:0;width:40px;height:10px;font-size:10px;line-height:10px;color:#999;transform-origin:0 0;transform:translate(0px,17.8px) rotate(-90deg);">100</div></div>
<div class="t" style="left:259px;top:588px;width:10px;height:40px;"><div style="position:absolute;left:0;top:0;width:40px;height:10px;font-size:10px;line-height:10px;color:#999;transform-origin:0 0;transform:translate(0px,17.8px) rotate(-90deg);">200</div></div>
<div class="t" style="left:259px;top:788px;width:10px;height:40px;"><div style="position:absolute;left:0;top:0;width:40px;height:10px;font-size:10px;line-height:10px;color:#999;transform-origin:0 0;transform:translate(0px,17.8px) rotate(-90deg);">300</div></div>
<div class="t" style="left:259px;top:988px;width:10px;height:40px;"><div style="position:absolute;left:0;top:0;width:40px;height:10px;font-size:10px;line-height:10px;color:#999;transform-origin:0 0;transform:translate(0px,17.8px) rotate(-90deg);">400</div></div>
<div style="left:514px;top:404px;width:598px;height:338px;border:1px solid rgba(120,80,70,0.6)"></div>
<div style="left:513px;top:403px;width:600px;height:340px;border:1px solid #00dcdc"></div>
<div style="left:510.0px;top:400.0px;width:7px;height:7px;border:1px solid #333;background:#fff"></div>
<div style="left:510.0px;top:739.0px;width:7px;height:7px;border:1px solid #333;background:#fff"></div>
<div style="left:810.0px;top:400.0px;width:7px;height:7px;border:1px solid #333;background:#fff"></div>
<div style="left:810.0px;top:739.0px;width:7px;height:7px;border:1px solid #333;background:#fff"></div>
<div style="left:1109.0px;top:400.0px;width:7px;height:7px;border:1px solid #333;background:#fff"></div>
<div style="left:1109.0px;top:739.0px;width:7px;height:7px;border:1px solid #333;background:#fff"></div>
<div style="left:510.0px;top:570.0px;width:7px;height:7px;border:1px solid #333;background:#fff"></div>
<div style="left:1109.0px;top:570.0px;width:7px;height:7px;border:1px solid #333;background:#fff"></div>
<svg style="left:510px;top:388px;" width="10" height="10" viewBox="0 0 10 10"><path d="M1 1.2 H9 L5 8.5 Z" fill="#f8c88a" stroke="#111" stroke-width="1.3" stroke-linejoin="round"/></svg>
<div style="left:1651px;top:120px;width:1px;height:897px;background:#d0d0d0"></div>
<div style="left:1652px;top:120px;width:249px;height:36px;background:#fafafa"></div>
<div style="left:1652px;top:156px;width:249px;height:1px;background:#d4d4d4"></div>
<div class="t" style="left:1666px;top:134.84px;font-size:12px;line-height:12px;color:#0a8ce0;font-weight:bold;">样式</div>
<div style="left:1666px;top:153px;width:24px;height:3px;background:#0a8ce0"></div>
<div class="t" style="left:1769px;top:134.84px;font-size:12px;line-height:12px;color:#333;font-weight:normal;">交互</div>
<div class="t" style="left:1873px;top:134.84px;font-size:12px;line-height:12px;color:#333;font-weight:normal;">说明</div>
<div class="t" style="left:1666px;top:169.26px;font-size:18px;line-height:18px;color:#c4c4c4;font-weight:normal;">(矩形名称)</div>
<div style="left:1652px;top:200px;width:249px;height:1px;background:#e2e2e2"></div>
<div class="t" style="left:1667px;top:217.53px;font-size:10px;line-height:10px;color:#888;font-weight:normal;">位置和尺寸</div>
<svg style="left:1878px;top:215px;" width="17" height="11" viewBox="0 0 17 11"><path d="M1 5.5 C4.5 0.5 12.5 0.5 16 5.5 C12.5 10.5 4.5 10.5 1 5.5 Z" fill="none" stroke="#999" stroke-width="1"/><circle cx="8.5" cy="5.5" r="2.2" fill="none" stroke="#999" stroke-width="1"/></svg>
<div class="t" style="left:1669px;top:242.15px;font-size:14px;line-height:14px;color:#333;font-weight:normal;">110</div>
<div style="left:1668.5px;top:260px;width:61px;height:1px;background:#777"></div>
<div class="t" style="left:1731px;top:245.88px;font-size:9px;line-height:9px;color:#666;font-weight:normal;">X</div>
<div class="t" style="left:1768px;top:242.15px;font-size:14px;line-height:14px;color:#333;font-weight:normal;">109</div>
<div style="left:1767.5px;top:260px;width:61px;height:1px;background:#777"></div>
<div class="t" style="left:1830.5px;top:245.88px;font-size:9px;line-height:9px;color:#666;font-weight:normal;">Y</div>
<div class="t" style="left:1852.5px;top:242.15px;font-size:14px;line-height:14px;color:#333;font-weight:normal;">0</div>
<div style="left:1852.0px;top:260px;width:44px;height:1px;background:#777"></div>
<div class="t" style="left:1890.5px;top:244.34px;font-size:12px;line-height:12px;color:#333;font-weight:normal;">°</div>
<div class="t" style="left:1775px;width:200px;text-align:center;top:265.38px;font-size:9px;line-height:9px;color:#333;font-weight:normal;">旋转</div>
<div class="t" style="left:1669px;top:285.45px;font-size:14px;line-height:14px;color:#333;font-weight:normal;">300</div>
<div style="left:1668.5px;top:303.3px;width:61px;height:1px;background:#777"></div>
<div class="t" style="left:1729.5px;top:289.38px;font-size:9px;line-height:9px;color:#666;font-weight:normal;">W</div>
<svg style="left:1747px;top:285px;" width="12" height="13" viewBox="0 0 12 13"><rect x="1" y="6" width="8" height="6.5" rx="1" fill="#999"/><path d="M6.5 6 V3.5 C6.5 0.5 10.5 0.5 10.5 3.5" fill="none" stroke="#999" stroke-width="1.2"/></svg>
<div class="t" style="left:1768px;top:285.45px;font-size:14px;line-height:14px;color:#333;font-weight:normal;">170</div>
<div style="left:1767.5px;top:303.3px;width:61px;height:1px;background:#777"></div>
<div class="t" style="left:1830px;top:289.38px;font-size:9px;line-height:9px;color:#666;font-weight:normal;">H</div>
<svg style="left:1857px;top:286px;" width="16" height="16" viewBox="0 0 16 16"><path d="M3 1.5 H1.5 V14.5 H3 M13 1.5 H14.5 V14.5 H13 M5 8 H11" fill="none" stroke="#888" stroke-width="1"/><path d="M3.3 8 L6 5.6 V10.4 Z M12.7 8 L10 5.6 V10.4 Z" fill="#888"/></svg>
<svg style="left:1879px;top:286px;" width="16" height="16" viewBox="0 0 16 16"><path d="M1.5 3 V1.5 H14.5 V3 M1.5 13 V14.5 H14.5 V13 M8 5 V11" fill="none" stroke="#888" stroke-width="1"/><path d="M8 3.3 L5.6 6 H10.4 Z M8 12.7 L5.6 10 H10.4 Z" fill="#888"/></svg>
<div style="left:1652px;top:318px;width:249px;height:2px;background:#e8e8e8"></div>
<div class="t" style="left:1667px;top:331.76px;font-size:18px;line-height:18px;color:#333;font-weight:normal;">Box 1*</div>
<div class="t" style="left:1852px;top:327.54px;font-size:10px;line-height:10px;color:#333;font-weight:normal;"><u>更新</u></div>
<div class="t" style="left:1852px;top:344.04px;font-size:10px;line-height:10px;color:#333;font-weight:normal;"><u>创建</u></div>
<svg style="left:1879px;top:333.2px;" width="17" height="15" viewBox="0 0 17 15"><path d="M1 1.5 H13 M1 4.5 H9 M1 7.5 H5 M1 10.5 H5 M1 13.5 H13" stroke="#888" stroke-width="1"/><path d="M7.3 11.7 L7.9 8.8 L13.6 3.1 L15.9 5.4 L10.2 11.1 Z" fill="none" stroke="#aaa" stroke-width="1"/></svg>
<div style="left:1652px;top:363px;width:249px;height:1px;background:#e6e6e6"></div>
<div class="t" style="left:1667px;top:379.54px;font-size:10px;line-height:10px;color:#888;font-weight:normal;">不透明性 <span style="font-size:8.5px;position:relative;top:-1.5px;margin-left:-2px">▼</span></div>
<div style="left:1736px;top:382px;width:95px;height:3px;background:#0a8ce0;border-radius:1.5px"></div>
<div style="left:1826px;top:378px;width:10px;height:10px;border:2px solid #888;border-radius:50%;background:#fff"></div>
<div class="t" style="left:1847px;top:374.15px;font-size:14px;line-height:14px;color:#333;font-weight:normal;">100%</div>
<div style="left:1846px;top:392px;width:49px;height:1px;background:#777"></div>
<div style="left:1652px;top:403px;width:249px;height:1px;background:#e6e6e6"></div>
<div class="t" style="left:1667px;top:419.04px;font-size:10px;line-height:10px;color:#888;font-weight:normal;">排版 <span style="font-size:8.5px;position:relative;top:-1.5px;margin-left:-2px">▼</span></div>
<div class="t" style="left:1667px;top:443.65px;font-size:14px;line-height:14px;color:#333;font-weight:normal;">隶书</div>
<div style="left:1667px;top:462px;width:229px;height:1px;background:#777"></div>
<svg style="left:1888px;top:451px;" width="10" height="7" viewBox="0 0 10 7"><path d="M1 1 L5 5 L9 1" fill="none" stroke="#bbb" stroke-width="1"/></svg>
<div class="t" style="left:1667px;top:480.95px;font-size:14px;line-height:14px;color:#333;font-weight:normal;">Regular</div>
<div style="left:1667px;top:499px;width:115px;height:1px;background:#777"></div>
<svg style="left:1774px;top:480px;" width="10" height="16" viewBox="0 0 10 16"><path d="M1.5 5 L5 1.5 L8.5 5 M1.5 11 L5 14.5 L8.5 11" fill="none" stroke="#ccc" stroke-width="1"/></svg>
<div class="t" style="left:1810px;top:481.15px;font-size:14px;line-height:14px;color:#333;font-weight:normal;">24</div>
<div style="left:1810px;top:499px;width:39px;height:1px;background:#777"></div>
<div style="left:1865px;top:480px;width:32px;height:20px;border:1px solid #ddd;border-radius:3px;background:#fff"></div>
<div style="left:1868px;top:483px;width:26px;height:14px;background:#000"></div>
<div class="t" style="left:1667px;top:517.95px;font-size:14px;line-height:14px;color:#333;font-weight:normal;">30</div>
<div style="left:1667px;top:536px;width:59px;height:1px;background:#777"></div>
<div class="t" style="left:1742px;top:517.95px;font-size:14px;line-height:14px;color:#333;font-weight:normal;">20</div>
<div style="left:1742px;top:536px;width:37px;height:1px;background:#777"></div>
<div class="t" style="left:1597px;width:200px;text-align:center;top:542.53px;font-size:10px;line-height:10px;color:#333;font-weight:normal;">行间距</div>
<div class="t" style="left:1661px;width:200px;text-align:center;top:542.53px;font-size:10px;line-height:10px;color:#333;font-weight:normal;">字间距</div>
<div class="t" style="left:1806.6px;top:535.42px;font-size:12.5px;line-height:12.5px;color:#777;font-weight:normal;letter-spacing:-0.6px">Aa</div>
<div style="left:1807px;top:548px;width:15px;height:2px;background:#888"></div>
<svg style="left:1830px;top:536px;" width="18" height="16" viewBox="0 0 18 16"><path d="M6.5 3 H11.5 L15.7 6.5 V14.8 H10 L7.3 12.7 Z" fill="#d8d8d8"/><rect x="1" y="1" width="10.5" height="2.2" fill="#888"/><rect x="5" y="1" width="2.3" height="11.7" fill="#888"/></svg>
<svg style="left:1669.5px;top:575px;" width="14.5" height="11" viewBox="0 0 14.5 11"><rect x="0" y="0.0" width="14.5" height="1.8" fill="#999"/><rect x="0" y="4.4" width="9" height="1.8" fill="#999"/><rect x="0" y="8.8" width="14.5" height="1.8" fill="#999"/></svg>
<svg style="left:1692.8px;top:575px;" width="14.5" height="11" viewBox="0 0 14.5 11"><rect x="0" y="0.0" width="14.5" height="1.8" fill="#0a8ce0"/><rect x="3.5" y="4.4" width="7.5" height="1.8" fill="#0a8ce0"/><rect x="0" y="8.8" width="14.5" height="1.8" fill="#0a8ce0"/></svg>
<svg style="left:1716.8px;top:575px;" width="14.5" height="11" viewBox="0 0 14.5 11"><rect x="0" y="0.0" width="14.5" height="1.8" fill="#999"/><rect x="5.5" y="4.4" width="9.0" height="1.8" fill="#999"/><rect x="0" y="8.8" width="14.5" height="1.8" fill="#999"/></svg>
<svg style="left:1738.8px;top:575px;" width="14.5" height="11" viewBox="0 0 14.5 11"><rect x="0" y="0.0" width="14.5" height="1.8" fill="#999"/><rect x="0" y="4.4" width="14.5" height="1.8" fill="#999"/><rect x="0" y="8.8" width="11.0" height="1.8" fill="#999"/></svg>
<svg style="left:1810px;top:572.3px;" width="16" height="7" viewBox="0 0 16 7"><rect x="0" y="0" width="16" height="1.8" fill="#999"/><rect x="0" y="5" width="16" height="1.8" fill="#999"/></svg>
<svg style="left:1833px;top:576.6px;" width="16" height="7" viewBox="0 0 16 7"><rect x="0" y="0" width="16" height="1.8" fill="#0a8ce0"/><rect x="0" y="5" width="16" height="1.8" fill="#0a8ce0"/></svg>
<svg style="left:1856px;top:580.4px;" width="16" height="7" viewBox="0 0 16 7"><rect x="0" y="0" width="16" height="1.8" fill="#999"/><rect x="0" y="5" width="16" height="1.8" fill="#999"/></svg>
<div style="left:1652px;top:606px;width:249px;height:1px;background:#e6e6e6"></div>
<div class="t" style="left:1667px;top:622.03px;font-size:10px;line-height:10px;color:#888;font-weight:normal;">填充 <span style="font-size:8.5px;position:relative;top:-1.5px;margin-left:-2px">▼</span></div>
<div style="left:1751px;top:619px;width:32px;height:20px;border:1px solid #ddd;border-radius:3px;background:#fff"></div>
<svg style="left:1751px;top:619px;" width="32" height="20" viewBox="0 0 32 20"><rect x="3.5" y="3.5" width="25" height="13" fill="#fff" stroke="#777" stroke-width="1"/></svg>
<div style="left:1808px;top:619px;width:32px;height:20px;border:1px solid #ddd;border-radius:3px;background:#fff"></div>
<svg style="left:1808px;top:619px;" width="32" height="20" viewBox="0 0 32 20"><rect x="3.5" y="3.5" width="25" height="13" fill="#fff" stroke="#777" stroke-width="1"/><path d="M3.5 16.5 L28.5 3.5" stroke="#777" stroke-width="0.8"/></svg>
<div class="t" style="left:1667px;width:200px;text-align:center;top:644.03px;font-size:10px;line-height:10px;color:#333;font-weight:normal;">颜色</div>
<div class="t" style="left:1724px;width:200px;text-align:center;top:644.03px;font-size:10px;line-height:10px;color:#333;font-weight:normal;">图片</div>
<div style="left:1652px;top:666px;width:249px;height:1px;background:#e6e6e6"></div>
<div class="t" style="left:1667px;top:682.03px;font-size:10px;line-height:10px;color:#888;font-weight:normal;">线段 <span style="font-size:8.5px;position:relative;top:-1.5px;margin-left:-2px">▼</span></div>
<div style="left:1751px;top:679px;width:32px;height:20px;border:1px solid #ddd;border-radius:3px;background:#fff"></div>
<svg style="left:1751px;top:679px;" width="32" height="20" viewBox="0 0 32 20"><rect x="3" y="3" width="26" height="14" fill="#777"/></svg>
<div class="t" style="left:1806px;top:681.00px;font-size:13px;line-height:13px;color:#333;font-weight:normal;">1</div>
<div style="left:1805px;top:698px;width:31px;height:1px;background:#777"></div>
<svg style="left:1855px;top:683px;" width="17" height="12" viewBox="0 0 17 12"><path d="M0.5 1.5 H3 M5 1.5 H7.5 M9.5 1.5 H12 M14 1.5 H16.5 M0.5 6 H2 M3.5 6 H5 M6.5 6 H8 M9.5 6 H11 M12.5 6 H14 M15.5 6 H16.5" stroke="#888" stroke-width="1"/><path d="M1.5 10.5 H15" stroke="#888" stroke-width="1"/></svg>
<div class="t" style="left:1667px;width:200px;text-align:center;top:704.03px;font-size:10px;line-height:10px;color:#333;font-weight:normal;">颜色</div>
<div class="t" style="left:1721px;width:200px;text-align:center;top:704.03px;font-size:10px;line-height:10px;color:#333;font-weight:normal;">线宽</div>
<div class="t" style="left:1763px;width:200px;text-align:center;top:704.03px;font-size:10px;line-height:10px;color:#333;font-weight:normal;">类型</div>
<svg style="left:1814px;top:734px;" width="17" height="15" viewBox="0 0 17 15"><rect x="1.5" y="1.5" width="13.5" height="11" fill="none" stroke="#777" stroke-width="1" stroke-dasharray="1.5,1.5"/><rect x="1" y="12.5" width="15" height="1.8" fill="#777"/></svg>
<svg style="left:1869px;top:735px;" width="17" height="13" viewBox="0 0 17 13"><g stroke="#ccc" stroke-width="1" fill="none"><path d="M1 3 H15.5 M1 3 L3.5 0.8 M15.5 10 H1 M15.5 10 L13 12.2"/></g></svg>
<div class="t" style="left:1722px;width:200px;text-align:center;top:757.03px;font-size:10px;line-height:10px;color:#333;font-weight:normal;">可见性</div>
<div class="t" style="left:1777px;width:200px;text-align:center;top:757.03px;font-size:10px;line-height:10px;color:#333;font-weight:normal;">箭头样式</div>
<div style="left:1652px;top:778px;width:249px;height:1px;background:#e6e6e6"></div>
<div class="t" style="left:1667px;top:794.53px;font-size:10px;line-height:10px;color:#888;font-weight:normal;">阴影 <span style="font-size:8.5px;position:relative;top:-1.5px;margin-left:-2px">▼</span></div>
<div style="left:1751px;top:791px;width:32px;height:20px;border:1px solid #ddd;border-radius:3px;background:#fff"></div>
<svg style="left:1751px;top:791px;" width="32" height="20" viewBox="0 0 32 20"><rect x="3.5" y="3.5" width="25" height="13" fill="#fff" stroke="#777" stroke-width="1"/><path d="M3.5 16.5 L28.5 3.5" stroke="#777" stroke-width="0.8"/></svg>
<div style="left:1808px;top:791px;width:32px;height:20px;border:1px solid #ddd;border-radius:3px;background:#fff"></div>
<svg style="left:1808px;top:791px;" width="32" height="20" viewBox="0 0 32 20"><rect x="3.5" y="3.5" width="25" height="13" fill="#fff" stroke="#777" stroke-width="1"/><path d="M3.5 16.5 L28.5 3.5" stroke="#777" stroke-width="0.8"/></svg>
<div class="t" style="left:1667px;width:200px;text-align:center;top:815.83px;font-size:10px;line-height:10px;color:#333;font-weight:normal;">外部</div>
<div class="t" style="left:1724px;width:200px;text-align:center;top:815.83px;font-size:10px;line-height:10px;color:#333;font-weight:normal;">内部</div>
<div style="left:1652px;top:837px;width:249px;height:1px;background:#e6e6e6"></div>
<div class="t" style="left:1667px;top:854.03px;font-size:10px;line-height:10px;color:#888;font-weight:normal;">圆角 <span style="font-size:8.5px;position:relative;top:-1.5px;margin-left:-2px">▼</span></div>
<div class="t" style="left:1751px;top:852.00px;font-size:13px;line-height:13px;color:#333;font-weight:normal;">0</div>
<div style="left:1751px;top:869px;width:31px;height:1px;background:#777"></div>
<svg style="left:1814px;top:852px;" width="16" height="16" viewBox="0 0 16 16"><path d="M1.5 14.5 V7 C1.5 3.5 4 1.5 8 1.5 H14.5 V14.5 Z" fill="none" stroke="#777" stroke-width="1"/></svg>
<div class="t" style="left:1667px;width:200px;text-align:center;top:875.53px;font-size:10px;line-height:10px;color:#333;font-weight:normal;">半径</div>
<div class="t" style="left:1722px;width:200px;text-align:center;top:875.53px;font-size:10px;line-height:10px;color:#333;font-weight:normal;">可见性</div>
<div style="left:1652px;top:896px;width:249px;height:1px;background:#e6e6e6"></div>
<div class="t" style="left:1667px;top:912.03px;font-size:10px;line-height:10px;color:#888;font-weight:normal;">边距 <span style="font-size:8.5px;position:relative;top:-1.5px;margin-left:-2px">▼</span></div>
<div class="t" style="left:1751.4px;top:911.00px;font-size:13px;line-height:13px;color:#333;font-weight:normal;">2</div>
<div style="left:1751.4px;top:928px;width:29px;height:1px;background:#777"></div>
<div class="t" style="left:1666.4px;width:200px;text-align:center;top:934.33px;font-size:10px;line-height:10px;color:#333;font-weight:normal;">左侧</div>
<div class="t" style="left:1789.9px;top:911.00px;font-size:13px;line-height:13px;color:#333;font-weight:normal;">2</div>
<div style="left:1789.9px;top:928px;width:29px;height:1px;background:#777"></div>
<div class="t" style="left:1704.9px;width:200px;text-align:center;top:934.33px;font-size:10px;line-height:10px;color:#333;font-weight:normal;">顶部</div>
<div class="t" style="left:1827.9px;top:911.00px;font-size:13px;line-height:13px;color:#333;font-weight:normal;">2</div>
<div style="left:1827.9px;top:928px;width:29px;height:1px;background:#777"></div>
<div class="t" style="left:1742.9px;width:200px;text-align:center;top:934.33px;font-size:10px;line-height:10px;color:#333;font-weight:normal;">右侧</div>
<div class="t" style="left:1865.6px;top:911.00px;font-size:13px;line-height:13px;color:#333;font-weight:normal;">2</div>
<div style="left:1865.6px;top:928px;width:29px;height:1px;background:#777"></div>
<div class="t" style="left:1780.6px;width:200px;text-align:center;top:934.33px;font-size:10px;line-height:10px;color:#333;font-weight:normal;">底部</div>
<div style="left:0px;top:1015px;width:1901px;height:1px;background:#f0ddd0"></div>
<div style="left:0px;top:1016px;width:1901px;height:1px;background:linear-gradient(to right,#00a8ec 0,#00a8ec 1265px,#0a66cc 1272px,#0842b0 1901px)"></div>
</body></html>
